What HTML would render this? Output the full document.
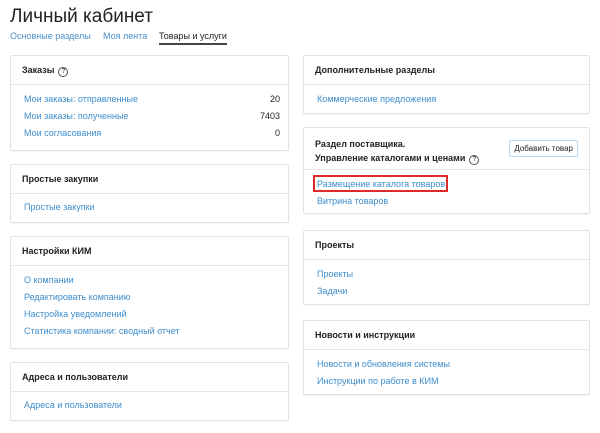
<html><head><style>
body{margin:0;width:600px;height:433px;background:#fff;font-family:"Liberation Sans",sans-serif;position:relative;overflow:hidden}
.a{position:absolute}
h1{position:absolute;left:10px;top:6px;margin:0;font-size:19px;font-weight:normal;color:#222}
.tab{position:absolute;top:31px;font-size:9px;color:#4a8fc9}
.card{position:absolute;border:1px solid #e2e2e2;border-radius:2px;box-sizing:border-box;box-shadow:0 1px 1px rgba(0,0,0,.04)}
.hd{position:absolute;left:0;right:0;top:0;border-bottom:1px solid #e8e8e8;font-size:9px;font-weight:bold;color:#222;padding-left:11px;box-sizing:border-box}
.l{position:absolute;left:13px;font-size:9px;color:#3d8dcc;white-space:nowrap}
.n{position:absolute;right:8px;font-size:9px;color:#222}
.q{display:inline-block;width:8px;height:8px;border:1px solid #555;border-radius:50%;font-size:7px;line-height:8px;text-align:center;font-weight:normal;margin-left:4px;vertical-align:0}
</style></head><body>
<h1>Личный кабинет</h1>
<div class="tab" style="left:10px">Основные разделы</div>
<div class="tab" style="left:103px">Моя лента</div>
<div class="tab" style="left:159px;color:#222">Товары и услуги</div>
<div class="a" style="left:159px;top:43px;width:68px;height:2px;background:#444"></div>

<div class="card" style="left:10px;top:55px;width:279px;height:96px">
<div class="hd" style="height:29px;line-height:28px">Заказы<span class="q">?</span></div>
<div class="l" style="top:38px">Мои заказы: отправленные</div><div class="n" style="top:38px">20</div>
<div class="l" style="top:55px">Мои заказы: полученные</div><div class="n" style="top:55px">7403</div>
<div class="l" style="top:72px">Мои согласования</div><div class="n" style="top:72px">0</div>
</div>
<div class="card" style="left:10px;top:164px;width:279px;height:59px">
<div class="hd" style="height:29px;line-height:28px">Простые закупки</div>
<div class="l" style="top:37px">Простые закупки</div></div>
<div class="card" style="left:10px;top:236px;width:279px;height:113px">
<div class="hd" style="height:29px;line-height:28px">Настройки КИМ</div>
<div class="l" style="top:38px">О компании</div>
<div class="l" style="top:55px">Редактировать компанию</div>
<div class="l" style="top:72px">Настройка уведомлений</div>
<div class="l" style="top:89px">Статистика компании: сводный отчет</div></div>
<div class="card" style="left:10px;top:362px;width:279px;height:59px">
<div class="hd" style="height:29px;line-height:28px">Адреса и пользователи</div>
<div class="l" style="top:37px">Адреса и пользователи</div></div>

<div class="card" style="left:303px;top:55px;width:287px;height:59px">
<div class="hd" style="height:29px;line-height:28px">Дополнительные разделы</div>
<div class="l" style="top:38px">Коммерческие предложения</div></div>
<div class="card" style="left:303px;top:127px;width:287px;height:87px">
<div class="hd" style="height:42px;padding-top:9px;line-height:14px">Раздел поставщика.<br>Управление каталогами и ценами<span class="q">?</span></div>
<div class="a" style="right:11px;top:12px;border:1px solid #b9d7ee;border-radius:2px;font-size:8px;padding:3px 4px;color:#222">Добавить товар</div>
<div class="a" style="left:9px;top:47px;width:135px;height:17px;border:2px solid #e02a2a;box-sizing:border-box"></div>
<div class="l" style="top:51px">Размещение каталога товаров</div>
<div class="l" style="top:68px">Витрина товаров</div></div>
<div class="card" style="left:303px;top:230px;width:287px;height:75px">
<div class="hd" style="height:29px;line-height:28px">Проекты</div>
<div class="l" style="top:38px">Проекты</div>
<div class="l" style="top:55px">Задачи</div></div>
<div class="card" style="left:303px;top:320px;width:287px;height:75px">
<div class="hd" style="height:29px;line-height:28px">Новости и инструкции</div>
<div class="l" style="top:38px">Новости и обновления системы</div>
<div class="l" style="top:55px">Инструкции по работе в КИМ</div></div>
</body></html>
